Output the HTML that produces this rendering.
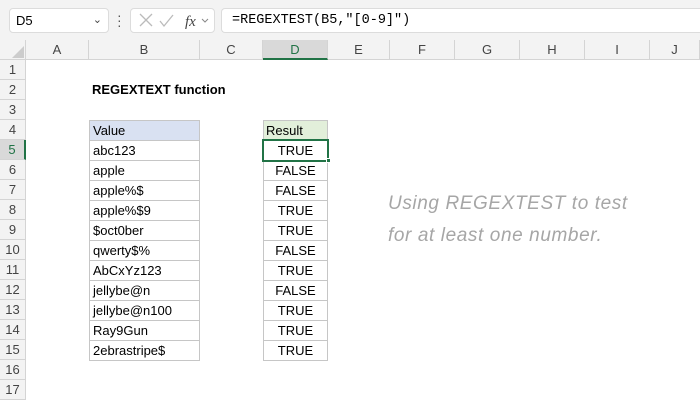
<!DOCTYPE html>
<html><head><style>
body{margin:0;width:700px;height:400px;overflow:hidden;background:#fff;font-family:"Liberation Sans",sans-serif;position:relative}
.a{position:absolute;box-sizing:border-box}
.ch{top:40px;height:20px;background:#f3f3f3;border-right:1px solid #d4d4d4;border-bottom:1px solid #d4d4d4;font-size:13px;color:#444;text-align:center;line-height:20px}
.rh{left:0;width:26px;height:20px;background:#f3f3f3;border-bottom:1px solid #d4d4d4;border-right:1px solid #d4d4d4;font-size:13px;color:#444;text-align:center;line-height:20px}
.c{height:21px;border:1px solid #c6c6c6;font-size:13px;line-height:19px;color:#000}
.b{left:89px;width:111px;padding-left:3px}
.d{left:263px;width:65px;text-align:center}
</style></head><body>
<div class="a" style="left:0;top:0;width:700px;height:40px;background:#f3f3f3"></div>
<div class="a" style="left:9px;top:8px;width:100px;height:25px;background:#fff;border:1px solid #dcdcdc;border-radius:4px;font-size:13px;line-height:23px;padding-left:6px">D5<span style="position:absolute;right:6px;top:0;color:#444;font-size:11px">&#8964;</span></div>
<div class="a" style="left:117px;top:13px;width:3px;height:16px;font-size:14px;line-height:5px;color:#555">·<br>·<br>·</div>
<div class="a" style="left:130px;top:8px;width:85px;height:25px;background:#fff;border:1px solid #dcdcdc;border-radius:4px"></div>
<svg class="a" style="left:130px;top:8px" width="85" height="25"><path d="M10 6l12 12M22 6L10 18" stroke="#bbb" stroke-width="1.3" fill="none"/><path d="M30 13l4 5 9-11" stroke="#bbb" stroke-width="1.3" fill="none"/><text x="55" y="18" font-family="Liberation Serif" font-style="italic" font-size="15" fill="#444">fx</text><path d="M72 11l3 3 3-3" stroke="#888" fill="none"/></svg>
<div class="a" style="left:221px;top:8px;width:479px;height:25px;background:#fff;border:1px solid #dcdcdc;border-right:none;border-radius:4px 0 0 4px;font-family:'Liberation Mono',monospace;font-size:13.5px;line-height:23px;padding-left:10px">=REGEXTEST(B5,"[0-9]")</div>
<div class="a ch" style="left:0;width:26px"></div>
<svg class="a" style="left:12px;top:46px" width="12" height="12"><path d="M12 0V12H0Z" fill="#ccc"/></svg>
<div class="a ch" style="left:26px;width:63px">A</div>
<div class="a ch" style="left:89px;width:111px">B</div>
<div class="a ch" style="left:200px;width:63px">C</div>
<div class="a ch" style="left:263px;width:65px;background:#d9d9d9;border-bottom:2px solid #217346;color:#217346">D</div>
<div class="a ch" style="left:328px;width:62px">E</div>
<div class="a ch" style="left:390px;width:65px">F</div>
<div class="a ch" style="left:455px;width:65px">G</div>
<div class="a ch" style="left:520px;width:65px">H</div>
<div class="a ch" style="left:585px;width:65px">I</div>
<div class="a ch" style="left:650px;width:50px">J</div>
<div class="a rh" style="top:60px">1</div><div class="a rh" style="top:80px">2</div><div class="a rh" style="top:100px">3</div><div class="a rh" style="top:120px">4</div>
<div class="a rh" style="top:140px;background:#d9d9d9;border-right:2px solid #217346;color:#217346">5</div>
<div class="a rh" style="top:160px">6</div><div class="a rh" style="top:180px">7</div><div class="a rh" style="top:200px">8</div><div class="a rh" style="top:220px">9</div><div class="a rh" style="top:240px">10</div><div class="a rh" style="top:260px">11</div><div class="a rh" style="top:280px">12</div><div class="a rh" style="top:300px">13</div><div class="a rh" style="top:320px">14</div><div class="a rh" style="top:340px">15</div><div class="a rh" style="top:360px">16</div><div class="a rh" style="top:380px">17</div>
<div class="a" style="left:92px;top:80px;font-size:13px;font-weight:bold;line-height:20px">REGEXTEXT function</div>
<div class="a c b" style="top:120px;background:#d9e1f2">Value</div>
<div class="a c d" style="top:120px;background:#e2efda;text-align:left;padding-left:2px">Result</div>
<div class="a c b" style="top:140px">abc123</div>
<div class="a c b" style="top:160px">apple</div>
<div class="a c b" style="top:180px">apple%$</div>
<div class="a c b" style="top:200px">apple%$9</div>
<div class="a c b" style="top:220px">$oct0ber</div>
<div class="a c b" style="top:240px">qwerty$%</div>
<div class="a c b" style="top:260px">AbCxYz123</div>
<div class="a c b" style="top:280px">jellybe@n</div>
<div class="a c b" style="top:300px">jellybe@n100</div>
<div class="a c b" style="top:320px">Ray9Gun</div>
<div class="a c b" style="top:340px">2ebrastripe$</div>
<div class="a c d" style="top:140px">TRUE</div>
<div class="a c d" style="top:160px">FALSE</div>
<div class="a c d" style="top:180px">FALSE</div>
<div class="a c d" style="top:200px">TRUE</div>
<div class="a c d" style="top:220px">TRUE</div>
<div class="a c d" style="top:240px">FALSE</div>
<div class="a c d" style="top:260px">TRUE</div>
<div class="a c d" style="top:280px">FALSE</div>
<div class="a c d" style="top:300px">TRUE</div>
<div class="a c d" style="top:320px">TRUE</div>
<div class="a c d" style="top:340px">TRUE</div>
<div class="a" style="left:262px;top:139px;width:67px;height:23px;border:2px solid #217346"></div>
<div class="a" style="left:326px;top:158px;width:5px;height:5px;background:#217346;border:1px solid #fff"></div>
<div class="a" style="left:388px;top:188px;font-size:19px;font-style:italic;color:#a6a6a6;line-height:32px;letter-spacing:0.6px">Using REGEXTEST to test<br>for at least one number.</div>
</body></html>
